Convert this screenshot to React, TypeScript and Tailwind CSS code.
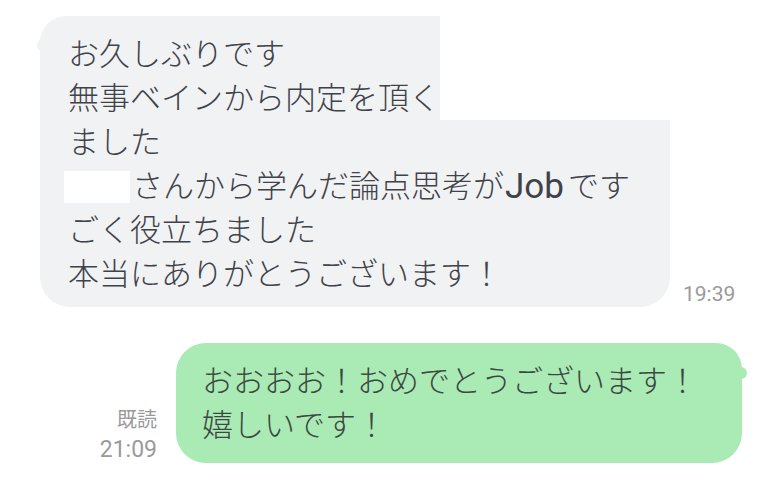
import React from "react";

const font = { fontFamily: 'Roboto, "Noto Sans CJK JP", "Noto Sans", sans-serif' };

const App: React.FC = () => {
  return (
    <div
      className="w-[780px] h-[480px] bg-white overflow-hidden relative"
      style={font}
    >
      {/* received message */}
      <div className="flex items-end pl-[40px] pt-[16px]">
        <div className="relative w-[630px] h-[291px] bg-[#f1f2f4] rounded-[30px] rounded-tl-[26px] pl-[28px] pt-[17px] text-[31px] leading-[44px] font-light text-[#3f4349] whitespace-nowrap">
          {/* little tail */}
          <div className="absolute left-[-3px] top-[22px] w-[10px] h-[14px] bg-[#f1f2f4] rounded-l-full" />
          <div>お久しぶりです</div>
          <div>無事ベインから内定を頂く</div>
          <div>ました</div>
          <div className="flex items-center h-[44px]">
            <span className="inline-block w-[66px] h-[32px] bg-white ml-[-4px] mr-[2px]" />
            <span>さんから学んだ論点思考が</span>
            <span className="text-[35px] font-normal ml-[1px] mr-[4px]">Job</span>
            <span>です</span>
          </div>
          <div>ごく役立ちました</div>
          <div>本当にありがとうございます！</div>
          {/* redaction */}
          <div className="absolute left-[400px] top-[-16px] w-[360px] h-[120px] bg-white" />
        </div>
        <div className="ml-[13px] mb-[1px] text-[21px] leading-[24px] text-[#9a9a9a]">
          19:39
        </div>
      </div>

      {/* sent message */}
      <div className="flex items-end justify-end pr-[38px] mt-[36px]">
        <div className="mr-[19px] mb-[-2px] flex flex-col items-end text-[#9a9a9a] text-[23px] leading-[30px]">
          <span className="text-[20px]">既読</span>
          <span>21:09</span>
        </div>
        <div className="relative w-[566px] h-[120px] bg-[#aaeab4] rounded-[30px] rounded-tr-[26px] pl-[26px] pt-[17px] text-[31px] leading-[44px] font-light text-[#3c4741] whitespace-nowrap">
          <div className="absolute right-[-5px] top-[24px] w-[10px] h-[12px] bg-[#aaeab4] rounded-r-full" />
          <div>おおおお！おめでとうございます！</div>
          <div>嬉しいです！</div>
        </div>
      </div>
    </div>
  );
};

export default App;
